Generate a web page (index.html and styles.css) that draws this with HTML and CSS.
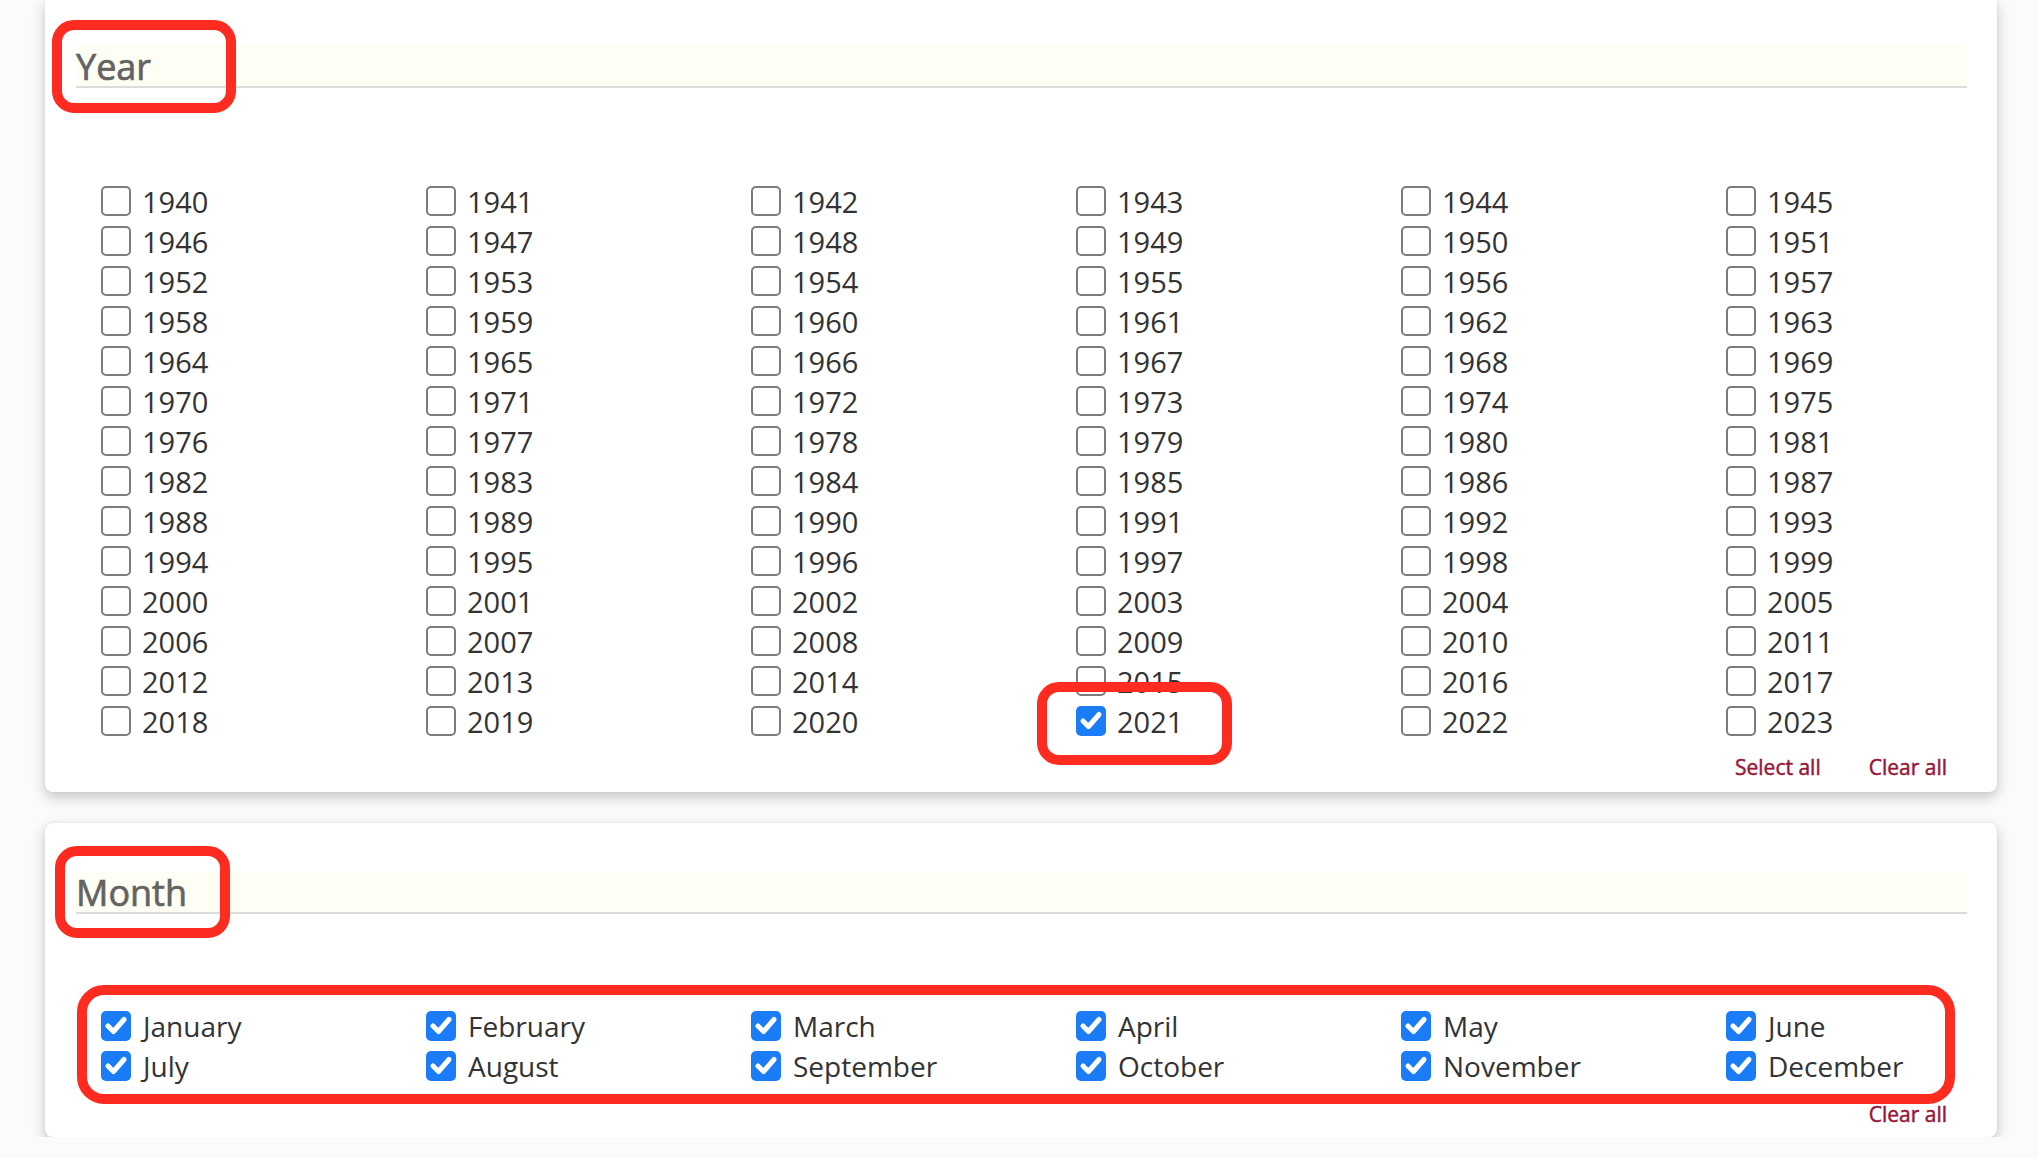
FILE: index.html
```html
<!DOCTYPE html>
<html>
<head>
<meta charset="utf-8">
<link rel="stylesheet" href="styles.css">
</head>
<body>
<div class="page">
  <section class="card card-year">
    <div class="sec-head">Year</div>
    <div class="grid">
      <label class="item"><span class="box"></span><span>1940</span></label>
      <label class="item"><span class="box"></span><span>1941</span></label>
      <label class="item"><span class="box"></span><span>1942</span></label>
      <label class="item"><span class="box"></span><span>1943</span></label>
      <label class="item"><span class="box"></span><span>1944</span></label>
      <label class="item"><span class="box"></span><span>1945</span></label>
      <label class="item"><span class="box"></span><span>1946</span></label>
      <label class="item"><span class="box"></span><span>1947</span></label>
      <label class="item"><span class="box"></span><span>1948</span></label>
      <label class="item"><span class="box"></span><span>1949</span></label>
      <label class="item"><span class="box"></span><span>1950</span></label>
      <label class="item"><span class="box"></span><span>1951</span></label>
      <label class="item"><span class="box"></span><span>1952</span></label>
      <label class="item"><span class="box"></span><span>1953</span></label>
      <label class="item"><span class="box"></span><span>1954</span></label>
      <label class="item"><span class="box"></span><span>1955</span></label>
      <label class="item"><span class="box"></span><span>1956</span></label>
      <label class="item"><span class="box"></span><span>1957</span></label>
      <label class="item"><span class="box"></span><span>1958</span></label>
      <label class="item"><span class="box"></span><span>1959</span></label>
      <label class="item"><span class="box"></span><span>1960</span></label>
      <label class="item"><span class="box"></span><span>1961</span></label>
      <label class="item"><span class="box"></span><span>1962</span></label>
      <label class="item"><span class="box"></span><span>1963</span></label>
      <label class="item"><span class="box"></span><span>1964</span></label>
      <label class="item"><span class="box"></span><span>1965</span></label>
      <label class="item"><span class="box"></span><span>1966</span></label>
      <label class="item"><span class="box"></span><span>1967</span></label>
      <label class="item"><span class="box"></span><span>1968</span></label>
      <label class="item"><span class="box"></span><span>1969</span></label>
      <label class="item"><span class="box"></span><span>1970</span></label>
      <label class="item"><span class="box"></span><span>1971</span></label>
      <label class="item"><span class="box"></span><span>1972</span></label>
      <label class="item"><span class="box"></span><span>1973</span></label>
      <label class="item"><span class="box"></span><span>1974</span></label>
      <label class="item"><span class="box"></span><span>1975</span></label>
      <label class="item"><span class="box"></span><span>1976</span></label>
      <label class="item"><span class="box"></span><span>1977</span></label>
      <label class="item"><span class="box"></span><span>1978</span></label>
      <label class="item"><span class="box"></span><span>1979</span></label>
      <label class="item"><span class="box"></span><span>1980</span></label>
      <label class="item"><span class="box"></span><span>1981</span></label>
      <label class="item"><span class="box"></span><span>1982</span></label>
      <label class="item"><span class="box"></span><span>1983</span></label>
      <label class="item"><span class="box"></span><span>1984</span></label>
      <label class="item"><span class="box"></span><span>1985</span></label>
      <label class="item"><span class="box"></span><span>1986</span></label>
      <label class="item"><span class="box"></span><span>1987</span></label>
      <label class="item"><span class="box"></span><span>1988</span></label>
      <label class="item"><span class="box"></span><span>1989</span></label>
      <label class="item"><span class="box"></span><span>1990</span></label>
      <label class="item"><span class="box"></span><span>1991</span></label>
      <label class="item"><span class="box"></span><span>1992</span></label>
      <label class="item"><span class="box"></span><span>1993</span></label>
      <label class="item"><span class="box"></span><span>1994</span></label>
      <label class="item"><span class="box"></span><span>1995</span></label>
      <label class="item"><span class="box"></span><span>1996</span></label>
      <label class="item"><span class="box"></span><span>1997</span></label>
      <label class="item"><span class="box"></span><span>1998</span></label>
      <label class="item"><span class="box"></span><span>1999</span></label>
      <label class="item"><span class="box"></span><span>2000</span></label>
      <label class="item"><span class="box"></span><span>2001</span></label>
      <label class="item"><span class="box"></span><span>2002</span></label>
      <label class="item"><span class="box"></span><span>2003</span></label>
      <label class="item"><span class="box"></span><span>2004</span></label>
      <label class="item"><span class="box"></span><span>2005</span></label>
      <label class="item"><span class="box"></span><span>2006</span></label>
      <label class="item"><span class="box"></span><span>2007</span></label>
      <label class="item"><span class="box"></span><span>2008</span></label>
      <label class="item"><span class="box"></span><span>2009</span></label>
      <label class="item"><span class="box"></span><span>2010</span></label>
      <label class="item"><span class="box"></span><span>2011</span></label>
      <label class="item"><span class="box"></span><span>2012</span></label>
      <label class="item"><span class="box"></span><span>2013</span></label>
      <label class="item"><span class="box"></span><span>2014</span></label>
      <label class="item"><span class="box"></span><span>2015</span></label>
      <label class="item"><span class="box"></span><span>2016</span></label>
      <label class="item"><span class="box"></span><span>2017</span></label>
      <label class="item"><span class="box"></span><span>2018</span></label>
      <label class="item"><span class="box"></span><span>2019</span></label>
      <label class="item"><span class="box"></span><span>2020</span></label>
      <label class="item"><span class="box checked"><svg viewBox="0 0 30 30"><path d="M7 15 L12.5 20.5 L23 8.5"/></svg></span><span>2021</span></label>
      <label class="item"><span class="box"></span><span>2022</span></label>
      <label class="item"><span class="box"></span><span>2023</span></label>
    </div>
    <div class="links"><a>Select all</a><a>Clear all</a></div>
    <div class="mark mark-year"></div>
    <div class="mark mark-2021"></div>
  </section>

  <section class="card card-month">
    <div class="sec-head">Month</div>
    <div class="grid grid-month">
      <label class="item"><span class="box checked"><svg viewBox="0 0 30 30"><path d="M7 15 L12.5 20.5 L23 8.5"/></svg></span><span>January</span></label>
      <label class="item"><span class="box checked"><svg viewBox="0 0 30 30"><path d="M7 15 L12.5 20.5 L23 8.5"/></svg></span><span>February</span></label>
      <label class="item"><span class="box checked"><svg viewBox="0 0 30 30"><path d="M7 15 L12.5 20.5 L23 8.5"/></svg></span><span>March</span></label>
      <label class="item"><span class="box checked"><svg viewBox="0 0 30 30"><path d="M7 15 L12.5 20.5 L23 8.5"/></svg></span><span>April</span></label>
      <label class="item"><span class="box checked"><svg viewBox="0 0 30 30"><path d="M7 15 L12.5 20.5 L23 8.5"/></svg></span><span>May</span></label>
      <label class="item"><span class="box checked"><svg viewBox="0 0 30 30"><path d="M7 15 L12.5 20.5 L23 8.5"/></svg></span><span>June</span></label>
      <label class="item"><span class="box checked"><svg viewBox="0 0 30 30"><path d="M7 15 L12.5 20.5 L23 8.5"/></svg></span><span>July</span></label>
      <label class="item"><span class="box checked"><svg viewBox="0 0 30 30"><path d="M7 15 L12.5 20.5 L23 8.5"/></svg></span><span>August</span></label>
      <label class="item"><span class="box checked"><svg viewBox="0 0 30 30"><path d="M7 15 L12.5 20.5 L23 8.5"/></svg></span><span>September</span></label>
      <label class="item"><span class="box checked"><svg viewBox="0 0 30 30"><path d="M7 15 L12.5 20.5 L23 8.5"/></svg></span><span>October</span></label>
      <label class="item"><span class="box checked"><svg viewBox="0 0 30 30"><path d="M7 15 L12.5 20.5 L23 8.5"/></svg></span><span>November</span></label>
      <label class="item"><span class="box checked"><svg viewBox="0 0 30 30"><path d="M7 15 L12.5 20.5 L23 8.5"/></svg></span><span>December</span></label>
    </div>
    <div class="links links-month"><a>Clear all</a></div>
    <div class="mark mark-month"></div>
    <div class="mark mark-months"></div>
  </section>
</div>
</body>
</html>
```

FILE: styles.css
```css
html, body {
  margin: 0;
  padding: 0;
  background: #fbfbfb;
  font-family: "Open Sans", "Noto Sans", sans-serif;
}

.page {
  padding: 0 41px 0 45px;
}

.card {
  position: relative;
  background: #fff;
  border-radius: 8px;
  box-shadow: 0 5px 14px rgba(0, 0, 0, 0.22), 0 0 3px rgba(0, 0, 0, 0.06);
}

.card-year {
  padding: 46px 30px 10px 31px;
  margin-bottom: 31px;
  border-top-left-radius: 0;
  border-top-right-radius: 0;
}

.card-month {
  padding: 49px 30px 8px 31px;
}

.sec-head {
  height: 40px;
  line-height: 41px;
  background: #fffef4;
  border-bottom: 2px solid #dcdcdc;
  font-size: 36px;
  color: #636363;
  -webkit-text-stroke: 0.7px #636363;
}

.grid {
  display: grid;
  grid-template-columns: repeat(6, 325px);
  grid-auto-rows: 40px;
  margin: 93px 0 0 25px;
  width: 1866px;
}

.grid-month {
  margin-top: 92px;
}

.item {
  display: flex;
  align-items: center;
  gap: 11px;
  font-size: 29px;
  color: #333;
  white-space: nowrap;
}

.grid-month .item {
  font-size: 28px;
  gap: 12px;
}

.box {
  box-sizing: border-box;
  width: 30px;
  height: 30px;
  flex: none;
  border: 2px solid #7c7c7c;
  border-radius: 5px;
  background: #fff;
}

.box.checked {
  border: none;
  background: #1a7cf7;
}

.box svg {
  display: block;
  width: 30px;
  height: 30px;
}

.box svg path {
  fill: none;
  stroke: #fff;
  stroke-width: 5;
  stroke-linejoin: round;
  stroke-linecap: round;
}

.links {
  display: flex;
  justify-content: flex-end;
  gap: 48px;
  height: 30px;
  line-height: 30px;
  margin-top: 11px;
  padding-right: 20px;
  font-size: 21px;
  color: #971839;
  -webkit-text-stroke: 0.5px #971839;
}

.links-month {
  margin-top: 13px;
}

.mark {
  position: absolute;
  box-sizing: border-box;
  border: 10px solid #fe2b20;
  border-radius: 22px;
}

.mark-year {
  left: 7px;
  top: 20px;
  width: 184px;
  height: 93px;
}

.mark-2021 {
  left: 992px;
  top: 682px;
  width: 195px;
  height: 83px;
}

.mark-month {
  left: 10px;
  top: 23px;
  width: 175px;
  height: 92px;
}

.mark-months {
  left: 32px;
  top: 162px;
  width: 1878px;
  height: 119px;
  border-radius: 27px;
}
```
